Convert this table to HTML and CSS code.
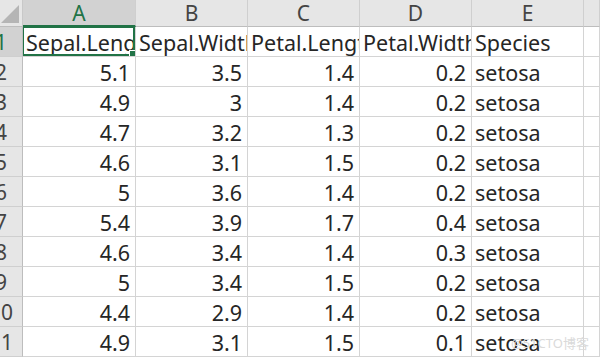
FILE: index.html
```html
<!DOCTYPE html>
<html>
<head>
<meta charset="utf-8">
<link rel="stylesheet" href="styles.css">
</head>
<body>
<div class="sheet">
  <div class="corner"><div class="tri"></div></div>
  <div class="ch sel">A</div>
  <div class="ch">B</div>
  <div class="ch">C</div>
  <div class="ch">D</div>
  <div class="ch">E</div>
  <div class="ch"></div>

  <div class="rh sel"><span>1</span></div>
  <div class="c a1">Sepal.Length<div class="selbox"><i class="handle"></i></div></div>
  <div class="c">Sepal.Width</div>
  <div class="c">Petal.Length</div>
  <div class="c">Petal.Width</div>
  <div class="c">Species</div>
  <div class="c"></div>

  <div class="rh"><span>2</span></div><div class="c n">5.1</div><div class="c n">3.5</div><div class="c n">1.4</div><div class="c n">0.2</div><div class="c">setosa</div><div class="c"></div>
  <div class="rh"><span>3</span></div><div class="c n">4.9</div><div class="c n">3</div><div class="c n">1.4</div><div class="c n">0.2</div><div class="c">setosa</div><div class="c"></div>
  <div class="rh"><span>4</span></div><div class="c n">4.7</div><div class="c n">3.2</div><div class="c n">1.3</div><div class="c n">0.2</div><div class="c">setosa</div><div class="c"></div>
  <div class="rh"><span>5</span></div><div class="c n">4.6</div><div class="c n">3.1</div><div class="c n">1.5</div><div class="c n">0.2</div><div class="c">setosa</div><div class="c"></div>
  <div class="rh"><span>6</span></div><div class="c n">5</div><div class="c n">3.6</div><div class="c n">1.4</div><div class="c n">0.2</div><div class="c">setosa</div><div class="c"></div>
  <div class="rh"><span>7</span></div><div class="c n">5.4</div><div class="c n">3.9</div><div class="c n">1.7</div><div class="c n">0.4</div><div class="c">setosa</div><div class="c"></div>
  <div class="rh"><span>8</span></div><div class="c n">4.6</div><div class="c n">3.4</div><div class="c n">1.4</div><div class="c n">0.3</div><div class="c">setosa</div><div class="c"></div>
  <div class="rh"><span>9</span></div><div class="c n">5</div><div class="c n">3.4</div><div class="c n">1.5</div><div class="c n">0.2</div><div class="c">setosa</div><div class="c"></div>
  <div class="rh"><span>10</span></div><div class="c n">4.4</div><div class="c n">2.9</div><div class="c n">1.4</div><div class="c n">0.2</div><div class="c">setosa</div><div class="c"></div>
  <div class="rh"><span>11</span></div><div class="c n">4.9</div><div class="c n">3.1</div><div class="c n">1.5</div><div class="c n">0.1</div><div class="c">setosa</div><div class="c"></div>
</div>
<div class="wm">@51CTO博客</div>
</body>
</html>
```
FILE: styles.css
```css
html, body {
  margin: 0;
  padding: 0;
  background: #fff;
  overflow: hidden;
}
body {
  width: 600px;
  height: 357px;
  position: relative;
  font-family: "Noto Sans", "Noto Sans CJK SC", sans-serif;
}
.sheet {
  display: grid;
  grid-template-columns: 23px 113px 112px 112px 112px 112px 16px;
  grid-template-rows: 27px repeat(11, 30px);
}
.corner {
  background: #e6e6e6;
  border-right: 1px solid #c8c8c8;
  border-bottom: 1px solid #bdbdbd;
  position: relative;
  overflow: hidden;
}
.tri {
  position: absolute;
  right: 3px;
  bottom: 3px;
  width: 0;
  height: 0;
  border-left: 18px solid transparent;
  border-bottom: 18px solid #b5b5b5;
}
.ch {
  background: #e6e6e6;
  border-right: 1px solid #cfcfcf;
  border-bottom: 1px solid #bdbdbd;
  color: #444;
  font-size: 21px;
  line-height: 26px;
  text-align: center;
}
.ch.sel {
  background: #d2d2d2;
  color: #217346;
  border-bottom: 2px solid #217346;
}
.rh {
  background: #e6e6e6;
  border-right: 1px solid #bdbdbd;
  border-bottom: 1px solid #cfcfcf;
  color: #444;
  font-size: 21px;
  line-height: 30px;
  overflow: hidden;
}
.rh.sel {
  background: #d2d2d2;
  color: #217346;
}
.rh span {
  display: block;
  width: 40px;
  margin-left: -19px;
  text-align: center;
}
.c {
  border-right: 1px solid #d4d4d4;
  border-bottom: 1px solid #d4d4d4;
  color: #262626;
  font-size: 21.5px;
  line-height: 31px;
  padding: 0 3px;
  white-space: nowrap;
  overflow: hidden;
}
.c.n {
  text-align: right;
  padding-right: 5px;
}
.a1 {
  position: relative;
}
.selbox {
  position: absolute;
  left: -1px;
  top: -1px;
  right: 0;
  bottom: 0;
  border: 2px solid #217346;
}
.handle {
  position: absolute;
  right: -3px;
  bottom: -3px;
  width: 5px;
  height: 5px;
  background: #217346;
  border: 1px solid #fff;
}
.wm {
  position: absolute;
  left: 511px;
  top: 333px;
  font-size: 13px;
  color: #dadada;
  font-family: "Noto Sans", "Noto Sans CJK SC", sans-serif;
}
```
